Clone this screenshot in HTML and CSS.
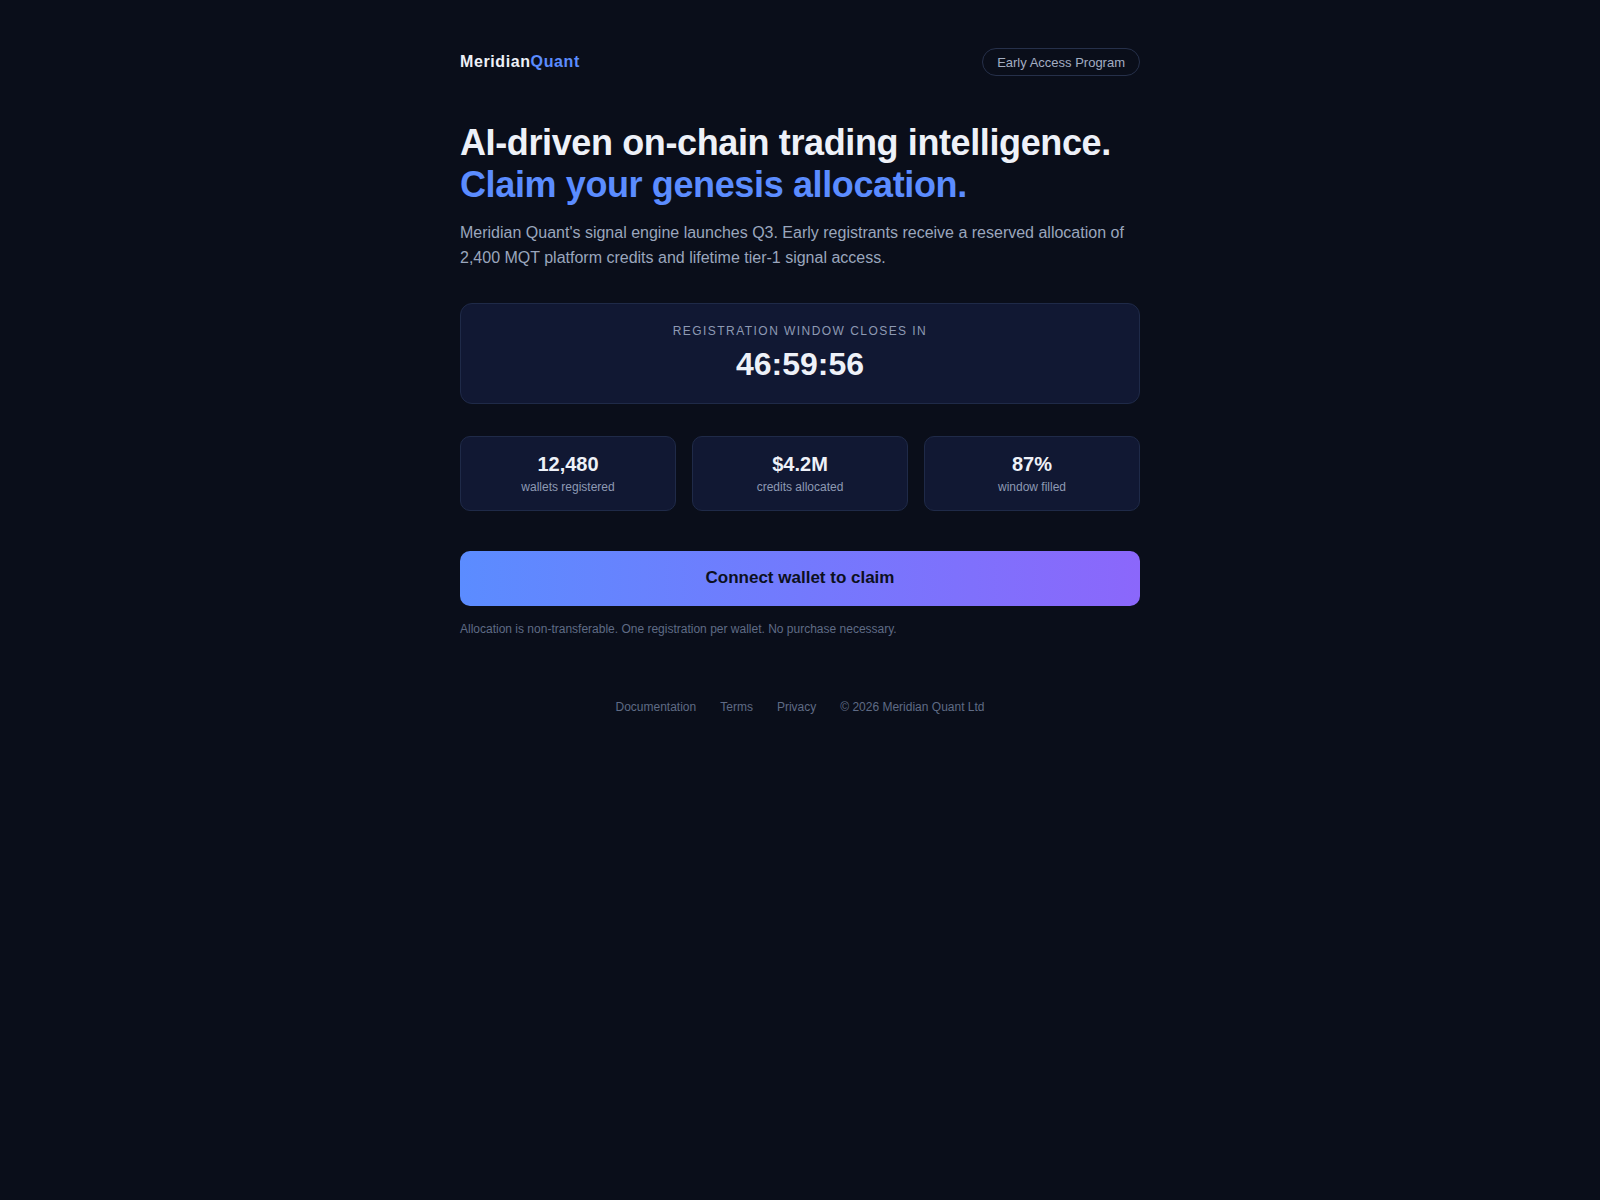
FILE: index.html
```html
<!DOCTYPE html>
<html lang="en">
<head>
<meta charset="utf-8">
<title>Meridian Quant — Early Access</title>
<link rel="stylesheet" href="styles.css">
</head>
<body>
<main class="page">
  <header class="header">
    <div class="logo">Meridian<span class="logo-accent">Quant</span></div>
    <div class="badge">Early Access Program</div>
  </header>

  <section class="hero">
    <h1 class="title">AI-driven on-chain trading intelligence.<br><span class="title-accent">Claim your genesis allocation.</span></h1>
    <p class="lead">Meridian Quant's signal engine launches Q3. Early registrants receive a reserved allocation of 2,400 MQT platform credits and lifetime tier-1 signal access.</p>
  </section>

  <section class="timer-card">
    <div class="timer-label">REGISTRATION WINDOW CLOSES IN</div>
    <div class="timer-value">46:59:56</div>
  </section>

  <section class="stats">
    <div class="stat">
      <div class="stat-value">12,480</div>
      <div class="stat-label">wallets registered</div>
    </div>
    <div class="stat">
      <div class="stat-value">$4.2M</div>
      <div class="stat-label">credits allocated</div>
    </div>
    <div class="stat">
      <div class="stat-value">87%</div>
      <div class="stat-label">window filled</div>
    </div>
  </section>

  <button class="cta" type="button">Connect wallet to claim</button>
  <p class="note">Allocation is non-transferable. One registration per wallet. No purchase necessary.</p>

  <footer class="footer">
    <a class="footer-link" href="#">Documentation</a>
    <a class="footer-link" href="#">Terms</a>
    <a class="footer-link" href="#">Privacy</a>
    <span class="footer-copy">© 2026 Meridian Quant Ltd</span>
  </footer>
</main>
</body>
</html>
```

FILE: styles.css
```css
* { box-sizing: border-box; }

html, body {
  margin: 0;
  padding: 0;
  background: #0a0e1a;
  color: #e8ecf5;
  font-family: "Liberation Sans", Arial, sans-serif;
}

.page {
  width: 680px;
  margin: 0 auto;
  padding: 48px 0 40px;
}

.header {
  display: flex;
  align-items: center;
  justify-content: space-between;
  height: 28px;
}

.logo {
  font-size: 16px;
  font-weight: 700;
  color: #eef1f8;
  letter-spacing: 0.6px;
}

.logo-accent { color: #5b8cff; }

.badge {
  height: 28px;
  padding: 0 14px;
  display: flex;
  align-items: center;
  border: 1px solid #26304a;
  border-radius: 14px;
  font-size: 13px;
  color: #a3adc2;
}

.hero { margin-top: 46px; }

.title {
  margin: 0;
  font-size: 36px;
  line-height: 1.16;
  font-weight: 700;
  letter-spacing: -0.38px;
  color: #eef1f8;
}

.title-accent { color: #5b8cff; }

.lead {
  margin: 14px 0 0;
  font-size: 16px;
  line-height: 1.6;
  color: #9aa6bd;
}

.timer-card {
  margin-top: 32px;
  background: #111833;
  border: 1px solid #1f2a48;
  border-radius: 12px;
  padding: 19px 24px 20px;
  text-align: center;
}

.timer-label {
  font-size: 12px;
  line-height: 16px;
  letter-spacing: 1.45px;
  color: #8e9ab3;
}

.timer-value {
  margin-top: 6px;
  font-size: 32px;
  line-height: 38px;
  font-weight: 700;
  color: #eef1f8;
}

.stats {
  margin-top: 32px;
  display: grid;
  grid-template-columns: repeat(3, 1fr);
  gap: 16px;
}

.stat {
  background: #111833;
  border: 1px solid #1f2a48;
  border-radius: 10px;
  padding: 15px 12px 15px;
  text-align: center;
}

.stat-value {
  font-size: 20px;
  line-height: 24px;
  font-weight: 700;
  color: #eef1f8;
}

.stat-label {
  margin-top: 3px;
  font-size: 12px;
  line-height: 16px;
  color: #8e9ab3;
}

.cta {
  display: block;
  width: 100%;
  margin-top: 40px;
  height: 55px;
  border: none;
  border-radius: 10px;
  background: linear-gradient(90deg, #5b8cff 0%, #8b67fb 100%);
  font-family: "Liberation Sans", Arial, sans-serif;
  font-size: 17px;
  font-weight: 700;
  color: #0c1020;
  cursor: pointer;
}

.note {
  margin: 15px 0 0;
  font-size: 12px;
  line-height: 16px;
  color: #5f6b85;
}

.footer {
  margin-top: 62px;
  display: flex;
  justify-content: center;
  gap: 24px;
  font-size: 12px;
  line-height: 16px;
}

.footer-link, .footer-copy {
  color: #5f6b85;
  text-decoration: none;
}
```
